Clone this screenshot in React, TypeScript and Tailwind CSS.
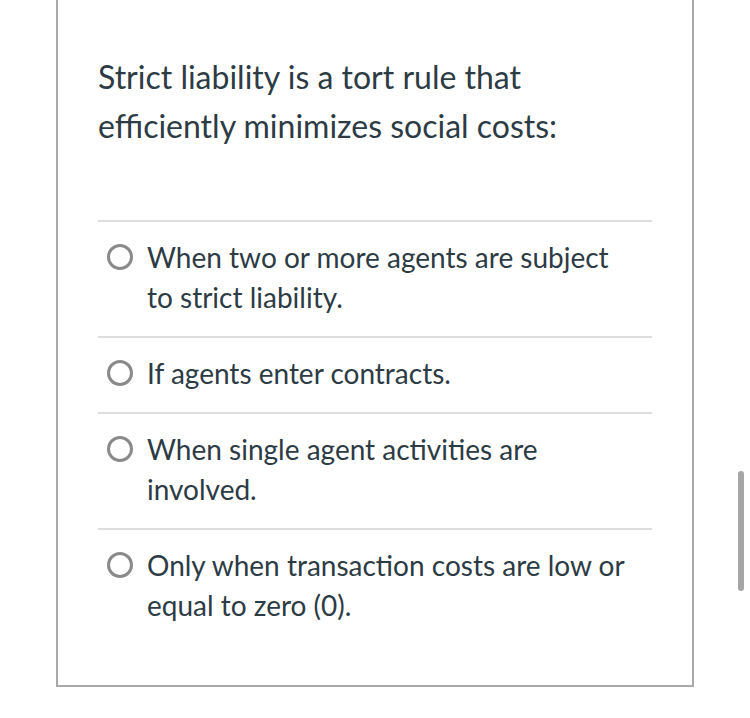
import React from "react";

const answers = [
  "When two or more agents are subject to strict liability.",
  "If agents enter contracts.",
  "When single agent activities are involved.",
  "Only when transaction costs are low or equal to zero (0).",
];

function Answer({ text }: { text: string }) {
  return (
    <label className="flex items-start gap-[14px] border-t-2 border-[#dddddd] pb-[19px] pt-[15px] pl-[9px] pr-[20px]">
      <span className="mt-[7px] h-[26px] w-[26px] shrink-0 rounded-full border-[3px] border-[#8a8a8a] bg-white"></span>
      <span className="text-[28px] leading-[40px]">{text}</span>
    </label>
  );
}

export default function App() {
  return (
    <div
      className="relative h-[718px] w-[750px] bg-white text-[#2d3b45]"
      style={{ fontFamily: "Lato, 'Open Sans', sans-serif" }}
    >
      <div className="ml-[56px] w-[638px] border-x-2 border-b-2 border-[#a9a9a9] px-[40px] pb-[41px] pt-[52px]">
        <div className="pr-[80px] text-[32px] leading-[49px]">
          Strict liability is a tort rule that efficiently minimizes social costs:
        </div>
        <div className="mt-[70px]">
          {answers.map((a) => (
            <Answer key={a} text={a} />
          ))}
        </div>
      </div>
      {/* scrollbar thumb */}
      <div className="absolute left-[738px] top-[471px] h-[120px] w-[6px] rounded-full bg-[#a6a6a6]"></div>
    </div>
  );
}
